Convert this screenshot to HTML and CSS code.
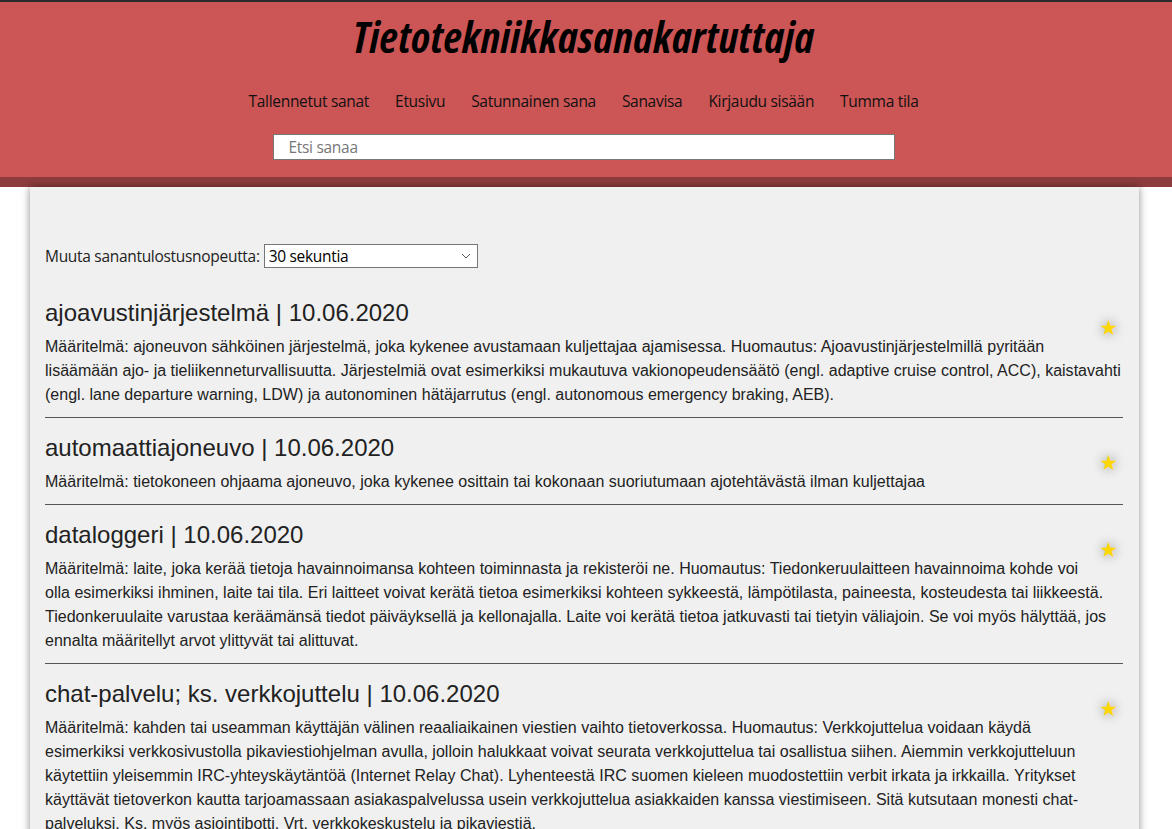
FILE: index.html
```html
<!DOCTYPE html>
<html lang="fi">
<head>
<meta charset="utf-8">
<title>Tietotekniikkasanakartuttaja</title>
<link rel="stylesheet" href="styles.css">
</head>
<body>
<header class="site-header">
  <h1 class="site-title">Tietotekniikkasanakartuttaja</h1>
  <nav class="nav">
    <a href="#">Tallennetut sanat</a>
    <a href="#">Etusivu</a>
    <a href="#">Satunnainen sana</a>
    <a href="#">Sanavisa</a>
    <a href="#">Kirjaudu sisään</a>
    <a href="#">Tumma tila</a>
  </nav>
  <div class="search-row">
    <input class="search" type="text" placeholder="Etsi sanaa">
  </div>
</header>
<main class="container">
  <div class="speed-row">
    <label class="speed-label" for="speed">Muuta sanantulostusnopeutta:</label>
    <div class="select-wrap">
      <select id="speed" class="speed-select">
        <option>30 sekuntia</option>
        <option>1 minuutti</option>
        <option>5 minuuttia</option>
      </select>
      <svg class="chev" width="10" height="6" viewBox="0 0 10 6"><path d="M1 1 L5 5 L9 1" fill="none" stroke="#555" stroke-width="1"/></svg>
    </div>
  </div>

  <article class="entry">
    <h2 class="term">ajoavustinjärjestelmä | 10.06.2020</h2>
    <p class="def"><span class="star">★</span>Määritelmä: ajoneuvon sähköinen järjestelmä, joka kykenee avustamaan kuljettajaa ajamisessa. Huomautus: Ajoavustinjärjestelmillä pyritään lisäämään ajo- ja tieliikenneturvallisuutta. Järjestelmiä ovat esimerkiksi mukautuva vakionopeudensäätö (engl. adaptive cruise control, ACC), kaistavahti (engl. lane departure warning, LDW) ja autonominen hätäjarrutus (engl. autonomous emergency braking, AEB).</p>
  </article>
  <hr class="sep">
  <article class="entry">
    <h2 class="term">automaattiajoneuvo | 10.06.2020</h2>
    <p class="def"><span class="star">★</span>Määritelmä: tietokoneen ohjaama ajoneuvo, joka kykenee osittain tai kokonaan suoriutumaan ajotehtävästä ilman kuljettajaa</p>
  </article>
  <hr class="sep">
  <article class="entry">
    <h2 class="term">dataloggeri | 10.06.2020</h2>
    <p class="def"><span class="star">★</span>Määritelmä: laite, joka kerää tietoja havainnoimansa kohteen toiminnasta ja rekisteröi ne. Huomautus: Tiedonkeruulaitteen havainnoima kohde voi olla esimerkiksi ihminen, laite tai tila. Eri laitteet voivat kerätä tietoa esimerkiksi kohteen sykkeestä, lämpötilasta, paineesta, kosteudesta tai liikkeestä. Tiedonkeruulaite varustaa keräämänsä tiedot päiväyksellä ja kellonajalla. Laite voi kerätä tietoa jatkuvasti tai tietyin väliajoin. Se voi myös hälyttää, jos ennalta määritellyt arvot ylittyvät tai alittuvat.</p>
  </article>
  <hr class="sep">
  <article class="entry">
    <h2 class="term">chat-palvelu; ks. verkkojuttelu | 10.06.2020</h2>
    <p class="def"><span class="star">★</span>Määritelmä: kahden tai useamman käyttäjän välinen reaaliaikainen viestien vaihto tietoverkossa. Huomautus: Verkkojuttelua voidaan käydä esimerkiksi verkkosivustolla pikaviestiohjelman avulla, jolloin halukkaat voivat seurata verkkojuttelua tai osallistua siihen. Aiemmin verkkojutteluun käytettiin yleisemmin IRC-yhteyskäytäntöä (Internet Relay Chat). Lyhenteestä IRC suomen kieleen muodostettiin verbit irkata ja irkkailla. Yritykset käyttävät tietoverkon kautta tarjoamassaan asiakaspalvelussa usein verkkojuttelua asiakkaiden kanssa viestimiseen. Sitä kutsutaan monesti chat-palveluksi. Ks. myös asiointibotti. Vrt. verkkokeskustelu ja pikaviestiä.</p>
  </article>
  <hr class="sep">
</main>
</body>
</html>
```
FILE: styles.css
```css
html, body {
  margin: 0;
  padding: 0;
  background: #ffffff;
}

body {
  font-family: "Liberation Sans", Arial, sans-serif;
  color: #222222;
}

.site-header {
  background: #cc5555;
  border-top: 2px solid #2b2b2b;
  border-bottom: 10px solid #8e3c3e;
  padding: 8px 5px 17px 0;
  text-align: center;
}

.site-title {
  margin: 0;
  font-family: "Open Sans", sans-serif;
  font-weight: 700;
  font-style: italic;
  font-stretch: 75%;
  font-size: 43px;
  line-height: 54px;
  color: #000000;
  letter-spacing: 0.4px;
}

.nav {
  display: flex;
  justify-content: center;
  gap: 26px;
  margin-top: 26px;
  font-family: "Open Sans", sans-serif;
  font-size: 15.5px;
  letter-spacing: -0.3px;
  line-height: 22px;
}

.nav a {
  color: #111111;
  text-decoration: none;
}

.search-row {
  display: flex;
  justify-content: center;
  margin-top: 22px;
}

.search {
  box-sizing: border-box;
  width: 622px;
  height: 26px;
  margin: 0;
  border: 1px solid #777777;
  background: #ffffff;
  padding: 0 15px;
  font-family: "Open Sans", sans-serif;
  font-size: 15.5px;
  letter-spacing: -0.3px;
  color: #222;
  outline: none;
}

.search::placeholder {
  color: #777777;
}

.container {
  box-sizing: border-box;
  width: 1109px;
  margin: 0 0 0 30px;
  background: #f0f0f0;
  box-shadow: 0 0 8px rgba(0, 0, 0, 0.45);
  padding: 15px 16px 20px 15px;
  min-height: 700px;
}

.speed-row {
  display: flex;
  align-items: center;
  gap: 4px;
  margin-top: 42px;
  margin-bottom: 31px;
  height: 24px;
}

.speed-label {
  font-family: "Open Sans", sans-serif;
  font-size: 15.5px;
  letter-spacing: -0.3px;
  color: #222;
}

.select-wrap {
  position: relative;
  width: 214px;
  height: 24px;
}

.speed-select {
  appearance: none;
  -webkit-appearance: none;
  box-sizing: border-box;
  width: 214px;
  height: 24px;
  margin: 0;
  border: 1px solid #767676;
  border-radius: 0;
  background: #ffffff;
  padding: 0 20px 0 4px;
  font-family: "Open Sans", sans-serif;
  font-size: 15.5px;
  letter-spacing: -0.3px;
  color: #000;
}

.chev {
  position: absolute;
  right: 7px;
  top: 9px;
  pointer-events: none;
}

.entry {
  margin: 16px 0 10px;
}

.term {
  margin: 0;
  font-size: 24px;
  line-height: 28px;
  font-weight: 400;
  color: #222222;
}

.def {
  margin: 8px 0 0;
  font-size: 16px;
  line-height: 24px;
  letter-spacing: 0.01px;
  color: #222222;
}

.star {
  float: right;
  width: 40px;
  height: 40px;
  margin-top: -16px;
  padding-right: 5px;
  box-sizing: border-box;
  text-align: right;
  font-family: "DejaVu Sans", sans-serif;
  font-size: 21px;
  line-height: 18px;
  letter-spacing: 0;
  color: #ffd700;
  text-shadow: 0 0 12px rgba(0, 0, 0, 0.45);
}

.sep {
  margin: 0;
  border: 0;
  border-top: 1px solid #555555;
  height: 0;
}
```
